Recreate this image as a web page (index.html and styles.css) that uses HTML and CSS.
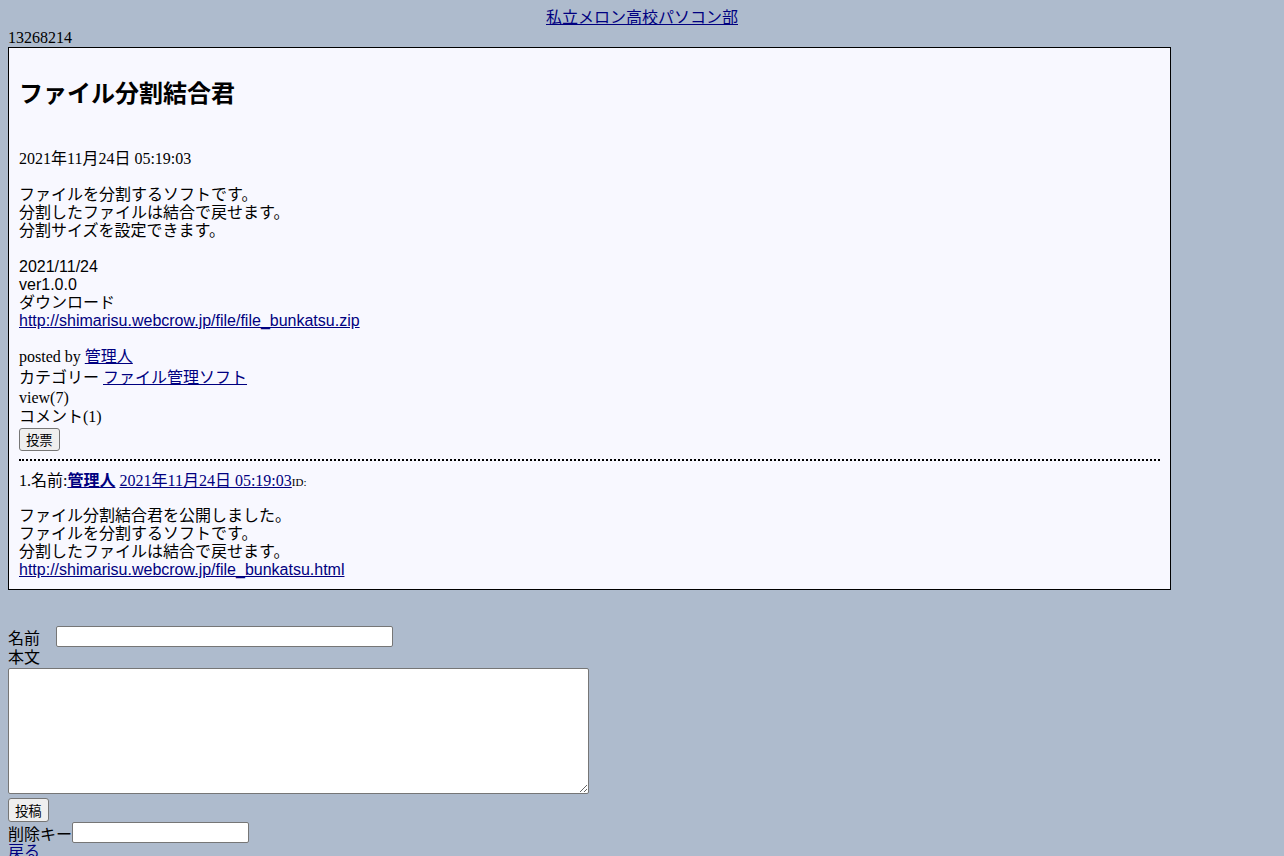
FILE: index.html
```html
<!DOCTYPE html>
<html lang="ja">
<head>
    <meta charset="UTF-8">
    <meta name="viewport" content="width=device-width, initial-scale=1.0">
    <title>ファイル分割結合君 - 私立メロン高校パソコン部</title>
    <link rel="stylesheet" href="styles.css">
</head>
<body>
    <div class="site-title"><a href="#">私立メロン高校パソコン部</a></div>
    <div class="counter">13268214</div>

    <div class="entry">
        <h1>ファイル分割結合君</h1>
        <div class="entry-date">2021年11月24日 05:19:03</div>

        <div class="entry-body">
            ファイルを分割するソフトです。<br>
            分割したファイルは結合で戻せます。<br>
            分割サイズを設定できます。<br>
            <br>
            2021/11/24<br>
            ver1.0.0<br>
            ダウンロード<br>
            <a href="#">http://shimarisu.webcrow.jp/file/file_bunkatsu.zip</a>
        </div>

        <div class="entry-meta">
            <div class="meta-line">posted by <a href="#">管理人</a></div>
            <div class="meta-line tall">カテゴリー <a href="#">ファイル管理ソフト</a></div>
            <div class="meta-line short">view(7)</div>
            <div class="meta-line">コメント(1)</div>
            <button class="btn vote-btn" type="button">投票</button>
        </div>

        <div class="comments">
            <div class="comment">
                <div class="comment-head">1.名前:<a href="#" class="comment-name">管理人</a> <a href="#">2021年11月24日 05:19:03</a><span class="comment-id">ID:</span></div>
                <div class="comment-body">
                    ファイル分割結合君を公開しました。<br>
                    ファイルを分割するソフトです。<br>
                    分割したファイルは結合で戻せます。<br>
                    <a href="#">http://shimarisu.webcrow.jp/file_bunkatsu.html</a>
                </div>
            </div>
        </div>
    </div>

    <form class="post-form" id="postForm">
        <div class="form-row">
            <label class="name-label" for="name">名前</label>
            <input class="text-input wide" type="text" id="name" name="name">
        </div>
        <div class="form-label">本文</div>
        <textarea class="body-input" name="body"></textarea>
        <button class="btn submit-btn" type="submit">投稿</button>
        <div class="form-row">
            <label for="delkey">削除キー</label>
            <input class="text-input" type="password" id="delkey" name="delkey">
        </div>
        <a href="#" class="back-link">戻る</a>
    </form>

    <script>
        document.getElementById('postForm').addEventListener('submit', (e) => {
            e.preventDefault();
        });
    </script>
</body>
</html>
```

FILE: styles.css
```css
* {
    box-sizing: border-box;
}

body {
    margin: 8px;
    background: #aebbcd;
    color: #000;
    font-family: 'Liberation Serif', 'Noto Sans CJK JP', serif;
    font-size: 16px;
}

a {
    color: #000080;
}

.site-title {
    text-align: center;
    line-height: 20px;
}

.counter {
    line-height: 19px;
}

.entry {
    box-sizing: content-box;
    width: 90%;
    padding: 10px;
    border: 1px solid #000;
    background: #f8f8ff;
}

h1 {
    margin: 19px 0 0;
    font-family: 'Noto Sans CJK JP', sans-serif;
    font-size: 24px;
    font-weight: bold;
    line-height: 30px;
}

.entry-date {
    margin-top: 42px;
    line-height: 20px;
}

.entry-body,
.comment-body {
    margin-top: 17px;
    font-family: 'Liberation Sans', 'Noto Sans CJK JP', sans-serif;
    line-height: 18px;
}

.entry-meta {
    margin-top: 17px;
}

.meta-line {
    line-height: 20px;
}

.meta-line.tall {
    line-height: 21px;
}

.meta-line.short {
    line-height: 19px;
}

.btn {
    display: block;
    height: 23px;
    margin-top: 3px;
    padding: 1px 6px;
    border: 1px solid #767676;
    border-radius: 3px;
    background: #efefef;
    color: #000;
    font-family: 'Noto Sans CJK JP', sans-serif;
    font-size: 13.33px;
    line-height: 19px;
}

.vote-btn {
    margin-top: 1px;
}

.comments {
    margin-top: 8px;
    border-top: 2px dotted #000;
}

.comment-head {
    padding-top: 10px;
    line-height: 20px;
}

.comment-body {
    margin-top: 15px;
}

.comment-name {
    font-weight: bold;
}

.comment-id {
    font-size: 11px;
}

.post-form {
    margin-top: 36px;
}

.form-row {
    display: flex;
    align-items: center;
    height: 21px;
}

.name-label {
    width: 48px;
}

.text-input {
    width: 177px;
    height: 21px;
    padding: 1px 2px;
    border: 1px solid #767676;
    border-radius: 2px;
    background: #fff;
}

.text-input.wide {
    width: 337px;
}

.form-label {
    line-height: 21px;
}

.body-input {
    display: block;
    width: 581px;
    height: 126px;
    padding: 2px;
    border: 1px solid #767676;
    border-radius: 2px;
    background: #fff;
    resize: vertical;
}

.submit-btn {
    margin-top: 4px;
    height: 24px;
}

.back-link {
    display: block;
    line-height: 18px;
}
```
